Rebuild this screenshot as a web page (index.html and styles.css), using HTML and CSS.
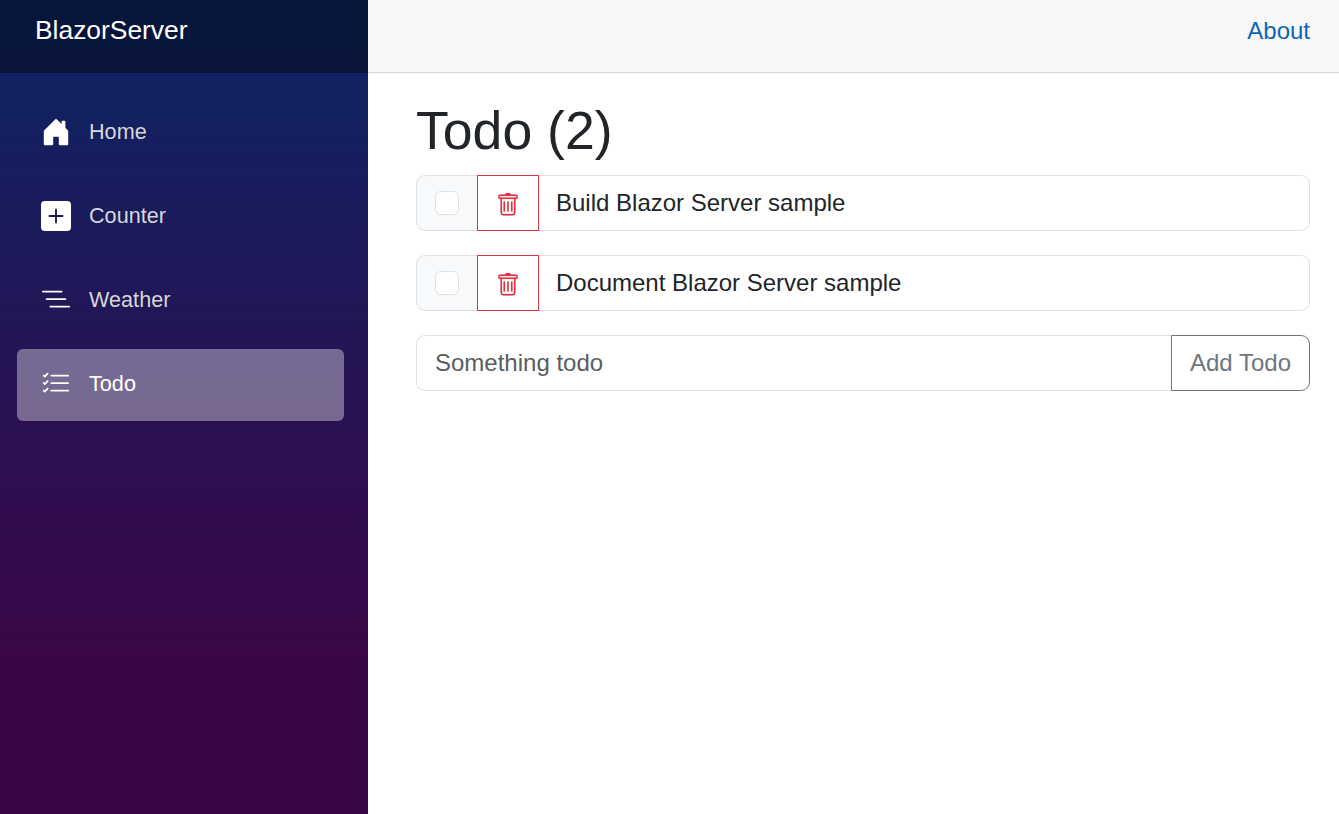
FILE: index.html
```html
<!DOCTYPE html>
<html lang="en">
<head>
<meta charset="utf-8">
<title>Todo</title>
<link rel="stylesheet" href="styles.css">
</head>
<body>
<svg class="sprite" aria-hidden="true">
  <symbol id="trash" viewBox="0 0 16 16"><path d="M5.5 5.5A.5.5 0 0 1 6 6v6a.5.5 0 0 1-1 0V6a.5.5 0 0 1 .5-.5zm2.5 0a.5.5 0 0 1 .5.5v6a.5.5 0 0 1-1 0V6a.5.5 0 0 1 .5-.5zm3 .5a.5.5 0 0 0-1 0v6a.5.5 0 0 0 1 0V6z"/><path fill-rule="evenodd" d="M14.5 3a1 1 0 0 1-1 1H13v9a2 2 0 0 1-2 2H5a2 2 0 0 1-2-2V4h-.5a1 1 0 0 1-1-1V2a1 1 0 0 1 1-1H6a1 1 0 0 1 1-1h2a1 1 0 0 1 1 1h3.5a1 1 0 0 1 1 1v1zM4.118 4 4 4.059V13a1 1 0 0 0 1 1h6a1 1 0 0 0 1-1V4.059L11.882 4H4.118zM2.5 3V2h11v1h-11z"/></symbol>
</svg>
<div class="page">
  <aside class="sidebar">
    <header class="brand-row"><a class="brand">BlazorServer</a></header>
    <nav class="nav">
      <a class="nav-link"><svg class="nav-icon" viewBox="0 0 16 16"><path d="M6.5 14.5v-3.505c0-.245.25-.495.5-.495h2c.25 0 .5.25.5.5v3.5a.5.5 0 0 0 .5.5h4a.5.5 0 0 0 .5-.5v-7a.5.5 0 0 0-.146-.354L13 5.793V2.5a.5.5 0 0 0-.5-.5h-1a.5.5 0 0 0-.5.5v1.293L8.354 1.146a.5.5 0 0 0-.708 0l-6 6A.5.5 0 0 0 1.5 7.5v7a.5.5 0 0 0 .5.5h4a.5.5 0 0 0 .5-.5Z"/></svg><span class="nav-text">Home</span></a>
      <a class="nav-link"><svg class="nav-icon" viewBox="0 0 16 16"><path d="M2 0a2 2 0 0 0-2 2v12a2 2 0 0 0 2 2h12a2 2 0 0 0 2-2V2a2 2 0 0 0-2-2H2zm6.5 4.5v3h3a.5.5 0 0 1 0 1h-3v3a.5.5 0 0 1-1 0v-3h-3a.5.5 0 0 1 0-1h3v-3a.5.5 0 0 1 1 0z"/></svg><span class="nav-text">Counter</span></a>
      <a class="nav-link"><svg class="nav-icon" viewBox="0 0 16 16"><path d="M4.5 11.5A.5.5 0 0 1 5 11h10a.5.5 0 0 1 0 1H5a.5.5 0 0 1-.5-.5zm-2-4A.5.5 0 0 1 3 7h10a.5.5 0 0 1 0 1H3a.5.5 0 0 1-.5-.5zm-2-4A.5.5 0 0 1 1 3h10a.5.5 0 0 1 0 1H1a.5.5 0 0 1-.5-.5z"/></svg><span class="nav-text">Weather</span></a>
      <a class="nav-link active"><svg class="nav-icon" viewBox="0 0 16 16"><path d="M5 11.5a.5.5 0 0 1 .5-.5h9a.5.5 0 0 1 0 1h-9a.5.5 0 0 1-.5-.5zm0-4a.5.5 0 0 1 .5-.5h9a.5.5 0 0 1 0 1h-9a.5.5 0 0 1-.5-.5zm0-4a.5.5 0 0 1 .5-.5h9a.5.5 0 0 1 0 1h-9a.5.5 0 0 1-.5-.5zM3.854 2.146a.5.5 0 0 1 0 .708l-1.5 1.5a.5.5 0 0 1-.708 0l-.5-.5a.5.5 0 1 1 .708-.708L2 3.293l1.146-1.147a.5.5 0 0 1 .708 0zm0 4a.5.5 0 0 1 0 .708l-1.5 1.5a.5.5 0 0 1-.708 0l-.5-.5a.5.5 0 1 1 .708-.708L2 7.293l1.146-1.147a.5.5 0 0 1 .708 0zm0 4a.5.5 0 0 1 0 .708l-1.5 1.5a.5.5 0 0 1-.708 0l-.5-.5a.5.5 0 0 1 .708-.708l.146.147 1.146-1.147a.5.5 0 0 1 .708 0z"/></svg><span class="nav-text">Todo</span></a>
    </nav>
  </aside>
  <main class="main">
    <div class="top-row"><a class="about">About</a></div>
    <article class="content">
      <h1 class="title">Todo (2)</h1>
      <div class="group">
        <div class="check-cell"><input class="check" type="checkbox" aria-label="Done"></div>
        <button class="delete" aria-label="Delete"><svg class="trash"><use href="#trash"/></svg></button>
        <input class="field" type="text" aria-label="Todo" value="Build Blazor Server sample">
      </div>
      <div class="group">
        <div class="check-cell"><input class="check" type="checkbox" aria-label="Done"></div>
        <button class="delete" aria-label="Delete"><svg class="trash"><use href="#trash"/></svg></button>
        <input class="field" type="text" aria-label="Todo" value="Document Blazor Server sample">
      </div>
      <div class="group">
        <input class="field field-new" type="text" placeholder="Something todo">
        <button class="add">Add Todo</button>
      </div>
    </article>
  </main>
</div>
</body>
</html>
```
FILE: styles.css
```css
* { box-sizing: border-box; }
body {
  margin: 0;
  font: 24px/36px "Liberation Sans", Arial, sans-serif;
  color: #212529;
  background: #fff;
}
.sprite { display: none; }
.page { display: flex; height: 100vh; overflow: hidden; }
.sidebar {
  flex: 0 0 368px;
  background: linear-gradient(180deg, rgb(10, 38, 102) -11px, #3a0647 655px);
}
.brand-row { height: 73px; padding: 10px 35px; background: rgba(0, 0, 0, .4); }
.brand { display: block; font-size: 26.4px; line-height: 40px; color: #fff; }
.nav { display: flex; flex-direction: column; gap: 12px; padding: 24px 24px 0 17px; }
.nav-link {
  display: flex;
  align-items: center;
  gap: 18px;
  height: 72px;
  padding: 0 24px;
  border-radius: 6px;
  font-size: 21.6px;
  color: #d7d7d7;
}
.nav-link.active { background: rgba(255, 255, 255, .37); color: #fff; }
.nav-icon { width: 30px; height: 30px; margin-top: -2px; fill: #fff; }
.nav-text { padding-bottom: 2px; letter-spacing: .03px; }
.main { flex: 1; min-width: 0; }
.top-row {
  display: flex;
  justify-content: flex-end;
  height: 73px;
  padding: 13px 29px 0;
  background: #f7f7f7;
  border-bottom: 1px solid #d6d5d5;
}
.about { color: #0d66b5; }
.content { padding: 25px 29px 0 48px; }
.title { margin: 0 0 13px; font-size: 53.6px; font-weight: 400; line-height: 64px; }
.group { display: flex; height: 56px; margin-bottom: 24px; }
.check-cell {
  flex: 0 0 61px;
  padding: 15px 18px;
  border: 1px solid #dee2e6;
  border-right: 0;
  border-radius: 9px 0 0 9px;
  background: #f8f9fa;
}
.check {
  appearance: none;
  display: block;
  width: 24px;
  height: 24px;
  margin: 0;
  border: 1px solid #dee2e6;
  border-radius: 6px;
  background: #fff;
}
.delete {
  display: flex;
  flex: 0 0 62px;
  align-items: center;
  justify-content: center;
  padding: 4px 0 0;
  border: 1px solid #dc3545;
  background: #fff;
}
.trash { width: 24px; height: 24px; fill: #dc3545; stroke: #dc3545; stroke-width: .12; }
.field {
  flex: 1;
  min-width: 0;
  padding: 0 18px 1px 17px;
  border: 1px solid #dee2e6;
  border-left: 0;
  border-radius: 0 9px 9px 0;
  font: inherit;
  color: inherit;
  background: #fff;
}
.field-new { padding-left: 18px; border-left: 1px solid #dee2e6; border-right: 0; border-radius: 9px 0 0 9px; }
.field-new::placeholder { color: #595c5f; opacity: 1; }
.add {
  flex: 0 0 139px;
  padding: 0 0 1px;
  border: 1px solid #6c757d;
  border-radius: 0 9px 9px 0;
  font: inherit;
  color: #6c757d;
  background: #fff;
}
```
